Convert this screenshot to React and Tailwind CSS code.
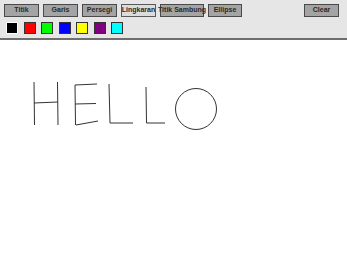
import React, { useState } from "react";

const tools = [
  { name: "Titik", w: "w-[35px]" },
  { name: "Garis", w: "w-[35px]" },
  { name: "Persegi", w: "w-[35px]" },
  { name: "Lingkaran", w: "w-[35px]" },
  { name: "Titik Sambung", w: "w-[44px]" },
  { name: "Ellipse", w: "w-[34px]" },
];

const colors = [
  "bg-[#000000]",
  "bg-[#ff0000]",
  "bg-[#00ff00]",
  "bg-[#0000ff]",
  "bg-[#ffff00]",
  "bg-[#800080]",
  "bg-[#00ffff]",
];

const App = () => {
  const [tool, setTool] = useState("Lingkaran");
  const [color, setColor] = useState(0);

  return (
    <div
      className="w-[347px] h-[260px] bg-white overflow-hidden"
      style={{ fontFamily: '"Liberation Sans", Arial, sans-serif' }}
    >
      <div className="h-[40px] bg-[#e6e6e6] border-b-2 border-[#6e6e6e] flex flex-col">
        <div className="flex items-start pt-[4px] pl-[4px] pr-[8px] gap-[4px]">
          {tools.map((t) => (
            <div
              key={t.name}
              onClick={() => setTool(t.name)}
              className={`${t.w} h-[13px] flex items-center justify-center whitespace-nowrap text-[7px] font-bold text-[#2a2a2a] border cursor-pointer ${
                tool === t.name
                  ? "bg-[#dcdcdc] border-[#5a5a5a]"
                  : "bg-[#a4a4a4] border-[#4a4a4a]"
              }`}
            >
              {t.name}
            </div>
          ))}
          <div className="ml-auto w-[35px] h-[13px] flex items-center justify-center text-[7px] font-bold text-[#2a2a2a] bg-[#a4a4a4] border border-[#4a4a4a] cursor-pointer">
            Clear
          </div>
        </div>
        <div className="flex items-center pl-[6px] pt-[5px] gap-[5.5px]">
          {colors.map((c, i) => (
            <div
              key={c}
              onClick={() => setColor(i)}
              className={`w-[12px] h-[12px] border ${c} ${
                color === i ? "border-white" : "border-[#333333]"
              }`}
            />
          ))}
        </div>
      </div>
      <div className="h-[220px] bg-white">
        <svg width="347" height="220" viewBox="0 40 347 220">
          <g fill="none" stroke="#333" strokeWidth="1">
            <path d="M34 82 L34.5 125" />
            <path d="M34 103 L58 102" />
            <path d="M57.5 82 L58 125" />
            <path d="M75 85 L75.5 125" />
            <path d="M75 85 L97 84" />
            <path d="M75 104 L96 103.5" />
            <path d="M76 125 L98 121" />
            <path d="M109 84 L110 123 L133 123" />
            <path d="M146 87 L146.5 123 L165 123" />
            <circle cx="196" cy="109" r="20.5" />
          </g>
        </svg>
      </div>
    </div>
  );
};

export default App;
